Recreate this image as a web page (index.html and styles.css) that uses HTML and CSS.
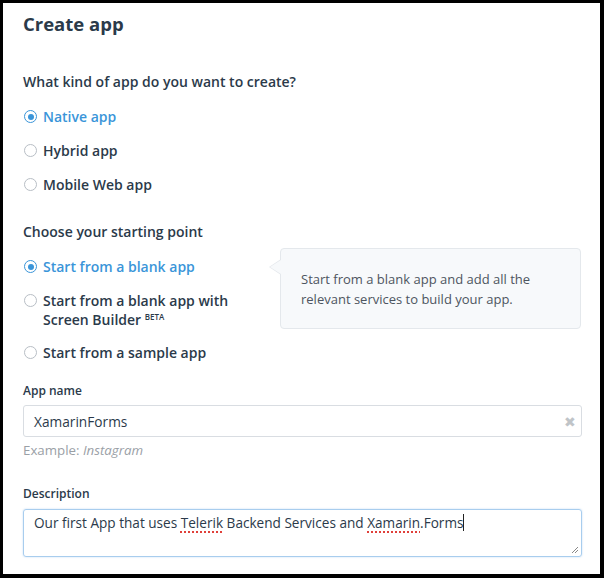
FILE: index.html
```html
<!DOCTYPE html>
<html>
<head>
<meta charset="utf-8">
<link rel="stylesheet" href="styles.css">
</head>
<body>
<div class="frame">
  <h1 class="title">Create app</h1>

  <div class="question">What kind of app do you want to create?</div>
  <div class="options">
    <div class="opt selected"><span class="radio"></span><span>Native app</span></div>
    <div class="opt"><span class="radio"></span><span>Hybrid app</span></div>
    <div class="opt"><span class="radio"></span><span>Mobile Web app</span></div>
  </div>

  <div class="question q2">Choose your starting point</div>
  <div class="start">
    <div class="options">
      <div class="opt selected"><span class="radio"></span><span>Start from a blank app</span></div>
      <div class="opt two"><span class="radio"></span><span>Start from a blank app with<br>Screen Builder <sup>BETA</sup></span></div>
      <div class="opt"><span class="radio"></span><span>Start from a sample app</span></div>
    </div>
    <div class="tip">Start from a blank app and add all the relevant services to build your app.</div>
  </div>

  <div class="label">App name</div>
  <div class="input"><span>XamarinForms</span><span class="clear">&#x2716;</span></div>
  <div class="hint">Example: <i>Instagram</i></div>

  <div class="label l2">Description</div>
  <div class="textarea">
    <span>Our first App that uses <span class="sp">Telerik</span> Backend Services and <span class="sp">Xamarin</span>.Forms</span><span class="caret"></span>
    <svg class="grip" width="8" height="8" viewBox="0 0 8 8"><path d="M7 1 L1 7 M7 4 L4 7" stroke="#888" stroke-width="1"/></svg>
  </div>
</div>
</body>
</html>
```

FILE: styles.css
```css
html, body { margin: 0; padding: 0; }
body { background: #000; font-family: "Open Sans", "Liberation Sans", sans-serif; color: #2b3a4a; }
.frame {
  margin: 3px 4px 0 3px;
  height: 571px;
  background: #fff;
  padding: 0 18px 0 20px;
  box-sizing: border-box;
  overflow: hidden;
}
.title { margin: 0; padding-top: 8px; font-size: 18.5px; font-weight: 700; line-height: 26px; color: #2b3a4a; }
.question { margin-top: 35px; font-size: 14px; font-weight: 600; line-height: 20px; }
.q2 { margin-top: 27px; }
.options { display: flex; flex-direction: column; gap: 14px; margin-top: 15px; }
.opt { display: flex; align-items: flex-start; gap: 6px; font-size: 14px; font-weight: 600; line-height: 20px; color: #2b3a4a; }
.opt.selected { color: #3a95d9; }
.opt.two { line-height: 19px; }
.radio {
  width: 11px; height: 11px; border: 1px solid #b8bec5; border-radius: 50%;
  margin-top: 3px; margin-left: 1px; flex: none; box-sizing: content-box; background: #fff;
  display: flex; align-items: center; justify-content: center;
}
.selected .radio { border-color: #3a95d9; }
.selected .radio::after { content: ""; width: 6px; height: 6px; border-radius: 50%; background: #3a95d9; }
sup { font-size: 8px; vertical-align: top; position: relative; top: -3px; font-weight: 600; }
.start { display: flex; align-items: flex-start; }
.start .options { width: 243px; flex: none; }
.tip {
  position: relative;
  margin-top: 6px;
  margin-left: 14px;
  width: 301px; height: 81px; box-sizing: border-box;
  background: #f7f9fb; border: 1px solid #e4e8ec; border-radius: 4px;
  padding: 20px 20px 0 20px;
  font-size: 13px; line-height: 20px; color: #4d5560;
}
.tip::before {
  content: ""; position: absolute; left: -12px; top: 10px;
  border: 8px solid transparent; border-right: 12px solid #e4e8ec; border-left: 0;
  width: 0; height: 0;
}
.tip::after {
  content: ""; position: absolute; left: -11px; top: 11px;
  border: 7px solid transparent; border-right: 11px solid #f7f9fb; border-left: 0;
}
.label { margin-top: 19px; font-size: 12px; font-weight: 600; line-height: 18px; }
.l2 { margin-top: 26px; }
.input {
  margin-top: 5px; height: 32px; box-sizing: border-box;
  border: 1px solid #d9dde2; border-radius: 3px;
  display: flex; align-items: center; justify-content: space-between;
  padding: 0 5px 0 10px; font-size: 13.7px; font-weight: 500; color: #2b3a4a;
}
.clear { color: #c0c4c8; font-size: 14px; }
.hint { margin-top: 4px; font-size: 13.3px; color: #9aa0a6; line-height: 18px; }
.hint i { font-style: italic; }
.textarea {
  position: relative;
  margin-top: 6px; height: 48px; box-sizing: border-box;
  border: 1px solid #a8cdee; border-radius: 3px; box-shadow: 0 0 2px rgba(100,160,230,0.4);
  padding: 3px 10px; font-size: 13.6px; font-weight: 500; line-height: 20px; color: #2b3a4a;
}
.sp { text-decoration: underline dotted #e0403a; text-underline-offset: 3px; text-decoration-thickness: 2px; }
.caret { display: inline-block; width: 1px; height: 17px; background: #222; vertical-align: -3px; }
.grip { position: absolute; right: 2px; bottom: 2px; }
```
